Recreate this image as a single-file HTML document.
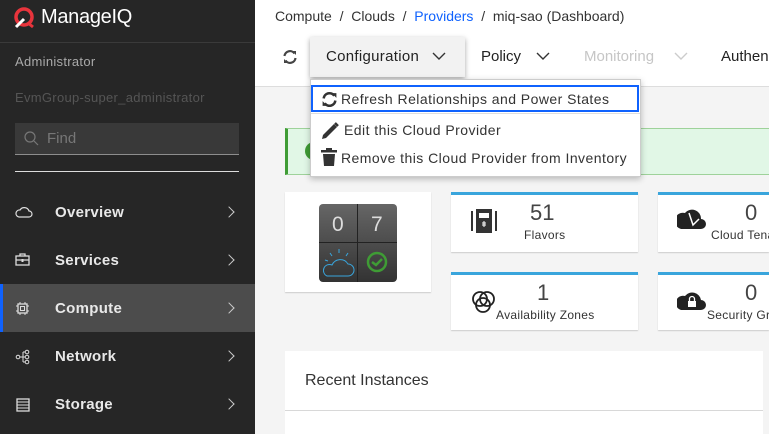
<!DOCTYPE html>
<html><head><meta charset="utf-8"><style>
*{box-sizing:border-box;margin:0;padding:0}
body{width:769px;height:434px;overflow:hidden;background:#f4f4f4;font-family:"Liberation Sans",sans-serif;position:relative}
.a{position:absolute;white-space:nowrap}
.side{left:0;top:0;width:255px;height:434px;background:#262626}
.nav{left:0;width:255px;height:48px;color:#e8e8e8;font-size:15px;font-weight:bold}
.nav span{position:absolute;left:55px;top:16px;letter-spacing:0.3px}
.nav .chev{position:absolute;left:225px;top:20px;width:8px;height:8px;border-right:1.5px solid #ccc;border-top:1.5px solid #ccc;transform:rotate(45deg)}
.nav svg{position:absolute;left:15px;top:17px}
.hdr{left:255px;top:0;width:514px;height:87px;background:#fff;border-bottom:1px solid #ddd}
.card{background:#fff;border-top:3px solid #39a5dc;box-shadow:0 1px 1px #ccc}
.num{font-size:22px;color:#444}
.lbl{font-size:12px;color:#333}
.dd{color:#333;font-size:14px;letter-spacing:0.45px}
</style></head><body>
<div class="a side"></div>
<svg class="a" style="left:13px;top:7px" width="22" height="22" viewBox="0 0 22 22"><circle cx="11" cy="10" r="8" fill="none" stroke="#e8343c" stroke-width="3.5"/><path d="M3 20 L11 12" stroke="#fff" stroke-width="3"/><path d="M15 16 L20 20" stroke="#e8343c" stroke-width="3"/></svg>
<div class="a" style="left:41px;top:6px;color:#fff;font-size:20px;letter-spacing:-0.3px">ManageIQ</div>
<div class="a" style="left:0;top:42px;width:255px;height:1px;background:#3a3a3a"></div>
<div class="a" style="left:15px;top:54px;color:#aaa;font-size:13px;letter-spacing:0.3px">Administrator</div>
<div class="a" style="left:15px;top:90px;color:#555;font-size:13px;letter-spacing:0.3px">EvmGroup-super_administrator</div>
<div class="a" style="left:15px;top:123px;width:224px;height:32px;background:#393939;border-bottom:1px solid #8d8d8d"></div>
<svg class="a" style="left:23px;top:130px" width="16" height="16"><circle cx="7" cy="7" r="5" fill="none" stroke="#777" stroke-width="1.2"/><path d="M11 11L15 15" stroke="#777" stroke-width="1.2"/></svg>
<div class="a" style="left:47px;top:130px;color:#777;font-size:15px">Find</div>
<div class="a" style="left:15px;top:171px;width:224px;height:1px;background:#ddd"></div>
<div class="a nav" style="top:188px"><svg width="18" height="14"><path d="M4 12 H14 A3 3 0 0 0 14 6 A5 5 0 0 0 5 5 A3.5 3.5 0 0 0 4 12Z" fill="none" stroke="#ddd" stroke-width="1.2"/></svg><span>Overview</span><i class="chev"></i></div>
<div class="a nav" style="top:236px"><svg width="16" height="14"><rect x="1" y="3" width="13" height="9" fill="none" stroke="#ddd" stroke-width="1.3"/><path d="M5 3V1H10V3M1 7H14" stroke="#ddd" stroke-width="1.3" fill="none"/><rect x="6.5" y="6" width="2" height="3" fill="#ddd"/></svg><span>Services</span><i class="chev"></i></div>
<div class="a nav" style="top:284px;background:#4c4c4c"><div class="a" style="left:0;top:0;width:3px;height:48px;background:#0f62fe"></div><svg width="16" height="16"><rect x="3" y="3" width="9" height="9" fill="none" stroke="#ddd" stroke-width="1.3"/><rect x="5.5" y="5.5" width="4" height="4" fill="none" stroke="#ddd"/><path d="M1 5H3M1 10H3M12 5H14M12 10H14M5 1V3M10 1V3M5 12V14M10 12V14" stroke="#ddd"/></svg><span>Compute</span><i class="chev"></i></div>
<div class="a nav" style="top:332px"><svg width="16" height="16"><circle cx="3" cy="8" r="1.8" fill="none" stroke="#ddd"/><circle cx="12" cy="3" r="1.8" fill="none" stroke="#ddd"/><circle cx="12" cy="8" r="1.8" fill="none" stroke="#ddd"/><circle cx="12" cy="13" r="1.8" fill="none" stroke="#ddd"/><path d="M5 8H10M8 3V13M8 3H10M8 13H10" stroke="#ddd" fill="none"/></svg><span>Network</span><i class="chev"></i></div>
<div class="a nav" style="top:380px"><svg width="16" height="16"><rect x="2" y="2" width="12" height="12" fill="none" stroke="#ddd" stroke-width="1.3"/><path d="M2 5H14M2 8H14M2 11H14" stroke="#ddd"/></svg><span>Storage</span><i class="chev"></i></div>

<div class="a hdr"></div>
<div class="a" style="left:275px;top:8px;font-size:14px;color:#333">Compute &nbsp;/&nbsp; Clouds &nbsp;/&nbsp; <span style="color:#0f62fe">Providers</span> &nbsp;/&nbsp; miq-sao (Dashboard)</div>
<svg class="a" style="left:282px;top:49px" width="16" height="16" viewBox="0 0 16 16"><path d="M2.5 7A5.5 5.5 0 0 1 12.5 4.5" fill="none" stroke="#444" stroke-width="2.2"/><path d="M10 2H14V6Z" fill="#444"/><path d="M13.5 9A5.5 5.5 0 0 1 3.5 11.5" fill="none" stroke="#444" stroke-width="2.2"/><path d="M6 14H2V10Z" fill="#444"/></svg>
<div class="a" style="left:310px;top:37px;width:155px;height:40px;background:#f2f2f2;box-shadow:0 2px 5px rgba(0,0,0,.35)"></div>
<div class="a" style="left:326px;top:48px;font-size:15px;color:#222;letter-spacing:0.3px">Configuration</div>
<svg class="a" style="left:432px;top:52px" width="14" height="9"><path d="M1 1L7 7L13 1" fill="none" stroke="#333" stroke-width="1.4"/></svg>
<div class="a" style="left:481px;top:48px;font-size:15px;color:#222">Policy</div>
<svg class="a" style="left:536px;top:52px" width="14" height="9"><path d="M1 1L7 7L13 1" fill="none" stroke="#333" stroke-width="1.4"/></svg>
<div class="a" style="left:584px;top:48px;font-size:15px;color:#c6c6c6">Monitoring</div>
<svg class="a" style="left:674px;top:52px" width="14" height="9"><path d="M1 1L7 7L13 1" fill="none" stroke="#ccc" stroke-width="1.4"/></svg>
<div class="a" style="left:721px;top:48px;font-size:15px;color:#222">Authen</div>

<div class="a" style="left:285px;top:128px;width:484px;height:47px;background:#e1f7e6;border-top:1px solid #9ed29a;border-bottom:1px solid #9ed29a;border-left:3px solid #3f9c35"></div>
<div class="a" style="left:305px;top:142px;width:18px;height:18px;border-radius:50%;background:#3f9c35"></div>

<div class="a" style="left:310px;top:79px;width:331px;height:98px;background:#fff;border:1px solid #ccc;box-shadow:0 2px 6px rgba(0,0,0,.25)"></div>
<div class="a" style="left:311px;top:85px;width:328px;height:27px;border:2px solid #0f62fe"></div>
<svg class="a" style="left:321px;top:91px" width="17" height="17" viewBox="0 0 16 16"><path d="M2.5 7A5.5 5.5 0 0 1 12.5 4.5" fill="none" stroke="#333" stroke-width="2.4"/><path d="M10 2H14.5V6.5Z" fill="#333"/><path d="M13.5 9A5.5 5.5 0 0 1 3.5 11.5" fill="none" stroke="#333" stroke-width="2.4"/><path d="M6 14H1.5V9.5Z" fill="#333"/></svg>
<div class="a dd" style="left:341px;top:91px">Refresh Relationships and Power States</div>
<div class="a" style="left:311px;top:113px;width:329px;height:1px;background:#ddd"></div>
<svg class="a" style="left:320px;top:121px" width="20" height="20"><path d="M2 18L3 14L14 3L17 6L6 17Z" fill="#333"/><path d="M15 2L18 5" stroke="#333" stroke-width="2.5"/></svg>
<div class="a dd" style="left:344px;top:122px">Edit this Cloud Provider</div>
<svg class="a" style="left:320px;top:147px" width="18" height="20"><rect x="1" y="3" width="16" height="2.5" fill="#333"/><rect x="6" y="1" width="6" height="2" fill="#333"/><path d="M3 7H15L14 19H4Z" fill="#333"/></svg>
<div class="a dd" style="left:341px;top:150px">Remove this Cloud Provider from Inventory</div>

<div class="a" style="left:285px;top:192px;width:146px;height:100px;background:#fff;box-shadow:0 1px 1px #ccc"></div>
<div class="a" style="left:319px;top:204px;width:78px;height:78px;border-radius:4px;background:linear-gradient(#666,#333);overflow:hidden">
<div class="a" style="left:38px;top:0;width:1px;height:78px;background:#222"></div>
<div class="a" style="left:0;top:38px;width:78px;height:1px;background:#222"></div>
<div class="a" style="left:13px;top:9px;color:#ddd;font-size:21px">0</div>
<div class="a" style="left:52px;top:9px;color:#ddd;font-size:21px">7</div>
<svg class="a" style="left:3px;top:42px" width="34" height="34"><path d="M5 30H26A6 6 0 0 0 26 18A9 9 0 0 0 10 19A6 6 0 0 0 5 30Z" fill="none" stroke="#39a5dc"/><path d="M17 3V7M8 7L10 10M26 7L24 10M3 14L6 15" stroke="#39a5dc"/></svg>
<svg class="a" style="left:46px;top:46px" width="24" height="24"><circle cx="12" cy="12" r="9" fill="none" stroke="#3f9c35" stroke-width="2.5"/><path d="M7 12L11 15L17 9" fill="none" stroke="#3f9c35" stroke-width="2.5"/></svg>
</div>

<div class="a card" style="left:451px;top:192px;width:187px;height:60px"></div>
<svg class="a" style="left:470px;top:208px" width="28" height="26"><rect x="1" y="3" width="2" height="20" fill="#333"/><rect x="25" y="3" width="2" height="20" fill="#333"/><rect x="6" y="1" width="16" height="24" fill="#333"/><rect x="9" y="5" width="10" height="5" fill="#fff"/><path d="M12 15H16M14 13V19M12 17H16" stroke="#fff"/></svg>
<div class="a num" style="left:530px;top:200px">51</div>
<div class="a lbl" style="left:524px;top:228px;letter-spacing:0.3px">Flavors</div>
<div class="a card" style="left:451px;top:272px;width:187px;height:58px"></div>
<svg class="a" style="left:470px;top:287px" width="28" height="28"><circle cx="10" cy="12" r="7" fill="none" stroke="#222" stroke-width="1.8"/><circle cx="17" cy="12" r="7" fill="none" stroke="#222" stroke-width="1.8"/><circle cx="13" cy="18" r="7" fill="none" stroke="#222" stroke-width="1.8"/></svg>
<div class="a num" style="left:537px;top:280px">1</div>
<div class="a lbl" style="left:496px;top:308px;letter-spacing:0.3px">Availability Zones</div>
<div class="a card" style="left:658px;top:192px;width:111px;height:60px;overflow:hidden"></div>
<svg class="a" style="left:677px;top:205px" width="30" height="26"><path d="M4 24H24A5 5 0 0 0 24 14A9 9 0 0 0 8 8A7 7 0 0 0 4 24Z" fill="#222"/><path d="M12 8L16 20L22 14" stroke="#fff" stroke-width="1.5" fill="none"/></svg>
<div class="a num" style="left:745px;top:200px">0</div>
<div class="a lbl" style="left:711px;top:228px;letter-spacing:0.3px">Cloud Tena</div>
<div class="a card" style="left:658px;top:272px;width:111px;height:58px"></div>
<svg class="a" style="left:677px;top:288px" width="30" height="26"><path d="M4 22H24A5 5 0 0 0 24 12A9 9 0 0 0 8 8A7 7 0 0 0 4 22Z" fill="#222"/><rect x="11" y="13" width="8" height="6" fill="#fff"/><path d="M12.5 13V11A2.5 2.5 0 0 1 17.5 11V13" stroke="#fff" stroke-width="1.3" fill="none"/></svg>
<div class="a num" style="left:745px;top:280px">0</div>
<div class="a lbl" style="left:707px;top:308px;letter-spacing:0.3px">Security Gr</div>

<div class="a" style="left:285px;top:351px;width:478px;height:83px;background:#fff"></div>
<div class="a" style="left:285px;top:410px;width:478px;height:1px;background:#d8d8d8"></div>
<div class="a" style="left:305px;top:372px;font-size:16px;color:#333">Recent Instances</div>
</body></html>
